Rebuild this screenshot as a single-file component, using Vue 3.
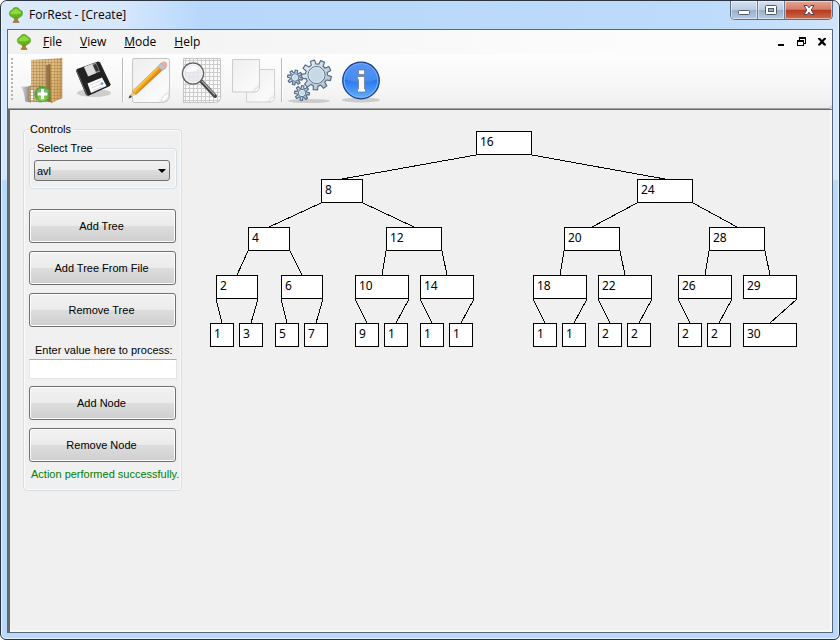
<script setup>
import { ref } from 'vue'

const tree = ref('avl')
const value = ref('')
const menus = ['File', 'View', 'Mode', 'Help']

// [id, label, x, y, width, parent id, parent side]
const rows = [
  ['a', '16', 286, 21, 56],
  ['b', '8', 131, 69, 42, 'a', 'l'],
  ['c', '24', 447, 69, 56, 'a', 'r'],
  ['d', '4', 58, 117, 42, 'b', 'l'],
  ['e', '12', 196, 117, 56, 'b', 'r'],
  ['f', '20', 374, 117, 56, 'c', 'l'],
  ['g', '28', 519, 117, 56, 'c', 'r'],
  ['h', '2', 26, 165, 42, 'd', 'l'],
  ['i', '6', 91, 165, 42, 'd', 'r'],
  ['j', '10', 165, 165, 54, 'e', 'l'],
  ['k', '14', 230, 165, 54, 'e', 'r'],
  ['l', '18', 343, 165, 54, 'f', 'l'],
  ['m', '22', 408, 165, 54, 'f', 'r'],
  ['n', '26', 488, 165, 54, 'g', 'l'],
  ['o', '29', 553, 165, 54, 'g', 'r'],
  ['p1', '1', 20, 213, 24, 'h', 'l'],
  ['p2', '3', 49, 213, 24, 'h', 'r'],
  ['p3', '5', 85, 213, 24, 'i', 'l'],
  ['p4', '7', 114, 213, 24, 'i', 'r'],
  ['p5', '9', 165, 213, 24, 'j', 'l'],
  ['p6', '1', 194, 213, 24, 'j', 'r'],
  ['p7', '1', 230, 213, 24, 'k', 'l'],
  ['p8', '1', 259, 213, 24, 'k', 'r'],
  ['p9', '1', 343, 213, 24, 'l', 'l'],
  ['q1', '1', 372, 213, 24, 'l', 'r'],
  ['q2', '2', 408, 213, 24, 'm', 'l'],
  ['q3', '2', 437, 213, 24, 'm', 'r'],
  ['q4', '2', 488, 213, 24, 'n', 'l'],
  ['q5', '2', 517, 213, 24, 'n', 'r'],
  ['q6', '30', 553, 213, 54, 'o', 'r'],
]
const nodes = rows.map(([id, label, x, y, w, parent, side]) => ({ id, label, x, y, w, parent, side }))
const byId = Object.fromEntries(nodes.map(n => [n.id, n]))
const edges = nodes.filter(n => n.parent).map(n => {
  const p = byId[n.parent]
  return { id: n.id, x1: n.side === 'l' ? p.x : p.x + p.w, y1: p.y + 24, x2: n.x + n.w / 2, y2: n.y }
})

// Outline of a cog wheel centred on cx, cy
function gear(cx, cy, outer, inner, teeth, turn = 0) {
  const pts = []
  const step = (Math.PI * 2) / teeth
  for (let i = 0; i < teeth; i++) {
    const a = i * step + turn
    for (const [r, o] of [[inner, -0.32], [outer, -0.2], [outer, 0.2], [inner, 0.32]]) {
      pts.push(`${(cx + r * Math.cos(a + o * step)).toFixed(2)},${(cy + r * Math.sin(a + o * step)).toFixed(2)}`)
    }
  }
  return pts.join(' ')
}
const gears = [
  { points: gear(31.5, 19, 15, 11, 9, 0.25), cx: 31.5, cy: 19, r: 8.5 },
  { points: gear(10, 21.5, 7.5, 5, 8, 0.2), cx: 10, cy: 21.5, r: 3.7 },
  { points: gear(17, 37, 7.5, 5, 8, 0.1), cx: 17, cy: 37, r: 3.7 },
]
</script>

<template>
  <div class="window">
    <svg class="defs" aria-hidden="true">
      <defs>
        <symbol id="tree-icon" viewBox="0 0 16 16">
          <path d="M6.600 9h2.800l.1 4 1.700 2.500H4.900l1.600-2.500z" fill="#b57c35" stroke="#8a5a20" stroke-width=".5" />
          <path d="M4.400 3C4.800 1.100 6.200.4 8 .5c2 0 3.200.9 3.600 2.400 1.900.1 3 1.500 2.900 3.400 0 1.900-.9 3.400-2.500 3.600-1 1.500-2.700 1.700-4 .8-1.500.9-3.300.4-4-.9-1.600-.1-2.600-1.400-2.600-3.300 0-1.900 1.200-3.300 3-3.500z" fill="#62b41f" stroke="#479a17" stroke-width=".6" />
          <path d="M5.200 3.600C5.700 1.600 9.500.8 10.600 3.600c1.200 0 2.600.9 2.700 2.300-3 1.700-8 1.200-10.800 1 .1-1.800 1-3.100 2.700-3.300z" fill="#91d83b" />
        </symbol>
      </defs>
    </svg>

    <header class="titlebar">
      <svg class="app-icon"><use href="#tree-icon" /></svg>
      <h1>ForRest - [Create]</h1>
      <div class="caption">
        <button class="cap" aria-label="Minimize">
          <svg width="14" height="14"><rect x="1.500" y="7.500" width="11" height="4" rx="1" fill="#fff" stroke="#505a68" /></svg>
        </button>
        <button class="cap" aria-label="Maximize">
          <svg width="14" height="14"><rect x="1.500" y="2.500" width="11" height="9" rx="1" fill="#fff" stroke="#505a68" /><rect x="4.500" y="5.500" width="5" height="3" fill="#91b1d4" stroke="#505a68" /></svg>
        </button>
        <button class="cap close" aria-label="Close">
          <svg width="14" height="14"><path d="M2 2.500h3.200L7 4.800l1.800-2.300H12L9.200 7l2.800 4.500H8.800L7 9.200l-1.800 2.300H2L4.800 7z" fill="#fff" stroke="#59404a" /></svg>
        </button>
      </div>
    </header>

    <div class="client">
      <nav class="menubar">
        <svg class="app-icon"><use href="#tree-icon" /></svg>
        <button v-for="m in menus" :key="m" class="menu"><u>{{ m[0] }}</u>{{ m.slice(1) }}</button>
        <div class="mdi">
          <button aria-label="Minimize document"><svg width="10" height="10"><path d="M2 7h6v2H2z" /></svg></button>
          <button aria-label="Restore document">
            <svg width="9" height="10" shape-rendering="crispEdges"><path d="M2 0h7v7H7V6h1V2H3v1H2zM0 3h7v6H0zM1 5v3h5V5z" fill-rule="evenodd" /></svg>
          </button>
          <button aria-label="Close document"><svg width="10" height="10"><path d="M1 1h2l2 2 2-2h2v1L6.500 4.500 9 7.500v1H7l-2-2-2 2H1v-1l2.500-3L1 2z" /></svg></button>
        </div>
      </nav>

      <div class="toolbar" role="toolbar">
        <span class="grip"></span>
        <button class="tool" aria-label="New project">
          <svg viewBox="0 0 48 48">
            <defs>
              <linearGradient id="fold" x2="1" y2="1"><stop stop-color="#e3c48d" /><stop offset="1" stop-color="#cda76e" /></linearGradient>
              <linearGradient id="flap" x2="1" y2="1"><stop stop-color="#e8c78e" /><stop offset="1" stop-color="#cf9d52" /></linearGradient>
              <linearGradient id="spine" x2="1"><stop stop-color="#a08153" /><stop offset="1" stop-color="#7b6138" /></linearGradient>
              <radialGradient id="green" cy=".8"><stop stop-color="#a4f05c" /><stop offset="1" stop-color="#4b9e34" /></radialGradient>
              <pattern id="mesh" width="3" height="3" patternUnits="userSpaceOnUse"><path d="M0 .5h3M.5 0v3" stroke="#9d763e" stroke-opacity=".4" /></pattern>
              <linearGradient id="cast" x2="1"><stop stop-color="#999" stop-opacity=".35" /><stop offset="1" stop-color="#777" /></linearGradient>
            </defs>
            <path d="M3 30.500q6 1 10-1v17l-6-1q0-8-4-15z" fill="url(#cast)" />
            <path d="M13 4l20-1v43l-20-1z" fill="url(#fold)" />
            <path d="M28 9l5-1v38l-5-1z" fill="url(#spine)" />
            <path d="M32.500 7L44 2v40q-6 2-11 5z" fill="url(#flap)" stroke="#b98e50" stroke-width=".6" />
            <path d="M28 9l1-6 15-1-11 5z" fill="#dfbf88" />
            <path d="M11 30.500l13-.5v16l-13-1z" fill="#d2b487" stroke="#a58656" stroke-width=".8" />
            <path d="M14 34v10" stroke="#fff" stroke-width="2" />
            <path d="M13 4l31-2v40l-11 4.500-22-1.500V31h2z" fill="url(#mesh)" />
            <circle cx="24.500" cy="38" r="7.500" fill="url(#green)" stroke="#55a03a" />
            <path d="M18 36a7 6.500 0 0 1 13 0q-6 2-13 0z" fill="#fff" opacity=".25" />
            <path d="M23 33h3v3.500h3.500v3H26V43h-3v-3.500h-3.500v-3H23z" fill="#fff" />
          </svg>
        </button>
        <button class="tool" aria-label="Save">
          <svg viewBox="0 0 48 48">
            <ellipse cx="25" cy="37" rx="17" ry="4" fill="#888" opacity=".35" />
            <path d="M8 13L29 5.500l2 .8 10.500 22-.5 1.700L19 40l-2-1L7 15z" fill="#222" />
            <path d="M7.500 14.500L18 39l1 1" stroke="#666" fill="none" />
            <path d="M15 11L27 6.500l4 9-12 5z" fill="#999" />
            <path d="M15 11l8-3 4 9-7.500 3.200z" fill="#ddd" />
            <path d="M24 9l3-1 3 6.500-3 1.200z" fill="#333" />
            <path d="M18.500 27.500L33 21.500l4.500 8.500L22 37z" fill="#fff" />
            <path d="M21 29l11-4.500M22.500 32l10-4M24 34.500l10-4" stroke="#c9ced5" stroke-width=".8" />
            <circle cx="33" cy="27.500" r="1.300" fill="#5b93e0" />
          </svg>
        </button>
        <span class="sep"></span>
        <button class="tool" aria-label="Edit">
          <svg viewBox="0 0 48 48">
            <defs>
              <linearGradient id="paper" x2="1" y2="1"><stop stop-color="#eee" /><stop offset=".8" stop-color="#fafafa" /><stop offset="1" stop-color="#e5e5e5" /></linearGradient>
              <linearGradient id="wood" gradientUnits="userSpaceOnUse" x1="18.500" y1="22" x2="22.500" y2="26"><stop stop-color="#ffd96c" /><stop offset=".5" stop-color="#f8b430" /><stop offset="1" stop-color="#d9860f" /></linearGradient>
            </defs>
            <path d="M8 2.500h33.500q2 0 2 2V40q-1 6.500-8 6.500H8q-1.500 0-1.500-2V4.500q0-2 1.500-2z" fill="url(#paper)" stroke="#c5c5c5" />
            <path d="M35 46q1-7 8-9-.5 8-8 9z" fill="#fff" stroke="#ddd" />
            <path d="M3 42l3.500-7 3.500 3.500z" fill="#e7c68e" />
            <path d="M2.500 42.500l1.500-3.500 2 2z" fill="#333" />
            <path d="M6.200 35.200L32 10.500l4 4L10 38.500z" fill="url(#wood)" stroke="#c97b12" stroke-width=".5" />
            <path d="M32 10.500L35 7l5 5-4 2.500z" fill="#bfc3c9" stroke="#8f949b" stroke-width=".6" />
            <path d="M35 7q3-2.500 5.500-.5 1.500 2.500-.5 5.500z" fill="#f2a99d" />
          </svg>
        </button>
        <button class="tool" aria-label="Find">
          <svg viewBox="0 0 48 48">
            <defs><pattern id="grid" width="4" height="4" patternUnits="userSpaceOnUse"><path d="M0 .5h4M.5 0v4" stroke="#ccc" /></pattern></defs>
            <path d="M6.500 2.500h37v40q-1 4-5 4h-32z" fill="#fafafa" />
            <path d="M6.500 2.500h37v40q-1 4-5 4h-32z" fill="url(#grid)" stroke="#c4c4c4" />
            <path d="M24.500 25.500L38 40" stroke="#444" stroke-width="4" stroke-linecap="round" />
            <path d="M25 25l13 14" stroke="#aaa" stroke-width="1.200" />
            <circle cx="16" cy="17.500" r="10.500" fill="#e6e8ee" fill-opacity=".85" stroke="#666" stroke-width="1.500" />
            <circle cx="16" cy="17.500" r="9.300" fill="none" stroke="#fff" stroke-width=".8" />
            <path d="M9 15.500a7.500 7.500 0 0 1 13-3q-6 5-13 3z" fill="#fff" opacity=".8" />
          </svg>
        </button>
        <button class="tool" aria-label="Copy">
          <svg viewBox="0 0 48 48">
            <path d="M18.500 13.500h28V42q-1 4-5 4h-23z" fill="url(#paper)" stroke="#d0d0d0" />
            <path d="M4.500 3.500h27V32q-1 4-5 4h-22z" fill="url(#paper)" stroke="#ccc" />
            <path d="M26 36q1-4 5.500-5.500-.5 5-5.500 5.500zM41 46q1-4 5.500-5.500-.5 5-5.500 5.500z" fill="#fff" stroke="#ccc" stroke-width=".6" />
          </svg>
        </button>
        <span class="sep"></span>
        <button class="tool" aria-label="Settings">
          <svg viewBox="0 0 48 48">
            <defs><linearGradient id="steel" x2="1" y2="1"><stop stop-color="#eef3f7" /><stop offset="1" stop-color="#a9bbc9" /></linearGradient></defs>
            <ellipse cx="24" cy="45" rx="21" ry="2" fill="#777" opacity=".3" />
            <g v-for="g in gears" :key="g.cx">
              <polygon :points="g.points" fill="url(#steel)" stroke="#526f89" stroke-width="1.200" stroke-linejoin="round" />
              <circle :cx="g.cx" :cy="g.cy" :r="g.r" fill="#c8d9e6" stroke="#526f89" />
              <circle :cx="g.cx" :cy="g.cy" :r="g.r - 1" fill="none" stroke="#eaf2f7" stroke-width=".7" />
            </g>
          </svg>
        </button>
        <button class="tool" aria-label="About">
          <svg viewBox="0 0 48 48">
            <defs>
              <linearGradient id="blue" x2="0" y2="1"><stop stop-color="#3f86f0" /><stop offset=".5" stop-color="#2a78ee" /><stop offset="1" stop-color="#63b0ff" /></linearGradient>
            </defs>
            <ellipse cx="25" cy="44" rx="19" ry="2.500" fill="#777" opacity=".3" />
            <circle cx="25" cy="24.500" r="18.300" fill="url(#blue)" stroke="#1a3f80" stroke-width="1.200" />
            <circle cx="25" cy="24.500" r="16.800" fill="none" stroke="#7fb4ff" stroke-width="1" />
            <path d="M9 23.500a16 15 0 0 1 32 0q-16 5-32 0z" fill="#8ab9fa" opacity=".3" />
            <path d="M22.500 14h6v4.500h-6zM21.500 20.500h7V33h1v3h-8v-3h1v-9.500h-1z" fill="#fbfaf6" stroke="#66758c" stroke-width=".7" />
          </svg>
        </button>
      </div>

      <main class="content">
        <fieldset class="group controls">
          <legend>Controls</legend>
          <fieldset class="group picker">
            <legend><label for="tree">Select Tree</label></legend>
            <div class="combo">
              <select id="tree" v-model="tree"><option>avl</option></select>
              <svg class="arrow" width="8" height="4"><path d="M0 0h8L4 4z" /></svg>
            </div>
          </fieldset>
          <div class="actions">
            <button class="push">Add Tree</button>
            <button class="push">Add Tree From File</button>
            <button class="push">Remove Tree</button>
          </div>
          <label class="prompt" for="value">Enter value here to process:</label>
          <input id="value" v-model="value" class="value" type="text">
          <div class="actions">
            <button class="push">Add Node</button>
            <button class="push">Remove Node</button>
          </div>
          <p class="status" role="status">Action performed successfully.</p>
        </fieldset>

        <section class="canvas" aria-label="Tree">
          <svg class="edges"><line v-for="e in edges" :key="e.id" :x1="e.x1" :y1="e.y1" :x2="e.x2" :y2="e.y2" /></svg>
          <div v-for="n in nodes" :key="n.id" class="node" :style="{ left: n.x + 'px', top: n.y + 'px', width: n.w + 'px' }">{{ n.label }}</div>
        </section>
      </main>
    </div>
  </div>
</template>

<style>
body {
  background: #fff;
}
</style>

<style scoped>
* {
  box-sizing: border-box;
}
button {
  border: 0;
  padding: 0;
  background: none;
  color: inherit;
  font: inherit;
}
svg {
  display: block;
}
.defs {
  position: absolute;
  width: 0;
  height: 0;
}
.window {
  display: flex;
  flex-direction: column;
  height: 100vh;
  padding: 0 6px 6px;
  border: 1px solid #2c3440;
  border-radius: 7px 7px 6px 6px;
  background: linear-gradient(#d4e7fc 0, #d4e7fc 178px, #b9dafb 180px);
  box-shadow: inset 0 0 0 1px #e6f5ff;
  font-family: "Liberation Sans", sans-serif;
  font-size: 11px;
  color: #000;
}
.titlebar {
  display: flex;
  flex: none;
  align-items: center;
  gap: 5px;
  height: 28px;
  margin: 0 -5px;
  padding-left: 6px;
  border-radius: 6px 6px 0 0;
  background: linear-gradient(90deg, #dcebfc 0, #d5e7fc 120px, #b7d8fc 200px, #bddbfb 85%, #cfe4fb 100%);
}
.app-icon {
  width: 16px;
  height: 16px;
}
h1 {
  flex: 1;
  margin: 0;
  font: 12px/16px "Open Sans", sans-serif;
}
.caption {
  display: flex;
  align-self: flex-start;
  height: 19px;
  margin-right: 5px;
  border: 1px solid #5d6c80;
  border-top: 0;
  border-radius: 0 0 5px 5px;
  overflow: hidden;
}
.cap {
  display: grid;
  place-items: center;
  width: 27px;
  border-right: 1px solid #6d7d94;
  background: linear-gradient(#d4e1ef 0, #bccde1 48%, #99b1cd 52%, #b5cae2 100%);
  box-shadow: inset 0 0 0 1px #ffffff80;
}
.cap.close {
  width: 47px;
  border-right: 0;
  background: linear-gradient(#e5a693 0, #d37b68 46%, #b83a22 52%, #cc6c4c 100%);
}
.client {
  display: flex;
  flex: 1;
  flex-direction: column;
  border: 1px solid #56687a;
  background: #f0f0f0;
}
.menubar {
  display: flex;
  flex: none;
  align-items: center;
  height: 24px;
  padding-left: 8px;
  background: linear-gradient(90deg, #f1f1f1, #fcfcfc 75%);
  font: 12px/16px "Open Sans", sans-serif;
}
.menu {
  margin-left: 18px;
}
.menu:first-of-type {
  margin-left: 11px;
}
.mdi {
  display: flex;
  gap: 11px;
  margin-left: auto;
  padding-right: 5px;
}
.toolbar {
  display: flex;
  flex: none;
  align-items: center;
  gap: 3px;
  height: 55px;
  padding: 0 2px 3px;
  border-bottom: 1px solid #a0a0a0;
  border-radius: 0 0 4px 0;
  background: linear-gradient(#fdfdfd, #f7f7f7 60%, #ededed);
}
.grip {
  width: 5px;
  height: 44px;
  background: repeating-linear-gradient(#b5b5b5 0 2px, transparent 2px 4px) 1px 0 / 2px 100% no-repeat;
}
.tool {
  flex: none;
  width: 48px;
  height: 48px;
}
.tool svg {
  width: 48px;
  height: 48px;
}
.sep {
  flex: none;
  width: 3px;
  height: 44px;
  border-right: 1px solid #b9bbbd;
  box-shadow: 1px 0 #fff;
}
.content {
  display: flex;
  flex: 1;
  align-items: flex-start;
  gap: 8px;
  padding: 12px 0 0 13px;
  border: solid #696969;
  border-width: 1px 0 0 2px;
  box-shadow: inset -2px -2px #fafafa;
}
.group {
  margin: 0;
  padding: 0 5px;
  min-width: 0;
  border: 1px solid #d5dfe5;
  border-radius: 4px;
  box-shadow: inset 0 0 0 1px #fafafa;
}
.group legend {
  margin: 0;
  padding: 0 2px 0 1px;
  line-height: 14px;
}
.controls {
  flex: none;
  width: 159px;
  padding-bottom: 9px;
}
.picker {
  width: 148px;
  margin-top: 5px;
  padding: 5px 6px 7px 4px;
}
.picker legend {
  padding: 0 3px;
}
.combo {
  position: relative;
}
.combo select {
  display: block;
  width: 100%;
  height: 21px;
  padding: 0 2px;
  appearance: none;
  border: 1px solid #707070;
  border-radius: 3px;
  background: linear-gradient(#f2f2f2 0, #ebebeb 49%, #dddddd 50%, #cfcfcf 100%);
  font: inherit;
  color: inherit;
}
.arrow {
  position: absolute;
  top: 9px;
  right: 4px;
  pointer-events: none;
}
.actions {
  display: grid;
  gap: 8px;
}
.picker + .actions {
  margin-top: 20px;
}
.push {
  width: 147px;
  height: 34px;
  padding-right: 2px;
  border: 1px solid #707070;
  border-radius: 3px;
  background: linear-gradient(#f2f2f2 0, #ebebeb 49%, #dddddd 50%, #cfcfcf 100%);
  box-shadow: inset 0 0 0 1px #fcfcfc;
}
.prompt {
  display: block;
  margin: 16px 0 2px 6px;
  line-height: 14px;
  white-space: nowrap;
}
.value {
  display: block;
  width: 148px;
  height: 20px;
  margin-bottom: 7px;
  padding: 2px;
  border: 1px solid #e2e6ea;
  border-top-color: #abadb3;
  background: #fff;
  font: inherit;
}
.status {
  margin: 5px 0 0;
  padding-left: 2px;
  line-height: 14px;
  color: #008000;
  white-space: nowrap;
}
.canvas {
  position: relative;
  flex: 1;
  align-self: stretch;
  margin-top: -12px;
}
.edges {
  position: absolute;
  inset: 0;
  width: 100%;
  height: 100%;
}
.edges line {
  stroke: #000;
  shape-rendering: crispEdges;
}
.node {
  position: absolute;
  height: 24px;
  padding-left: 3px;
  border: 1px solid #000;
  background: #fff;
  font: 12px/20px "Noto Sans", sans-serif;
}
</style>
